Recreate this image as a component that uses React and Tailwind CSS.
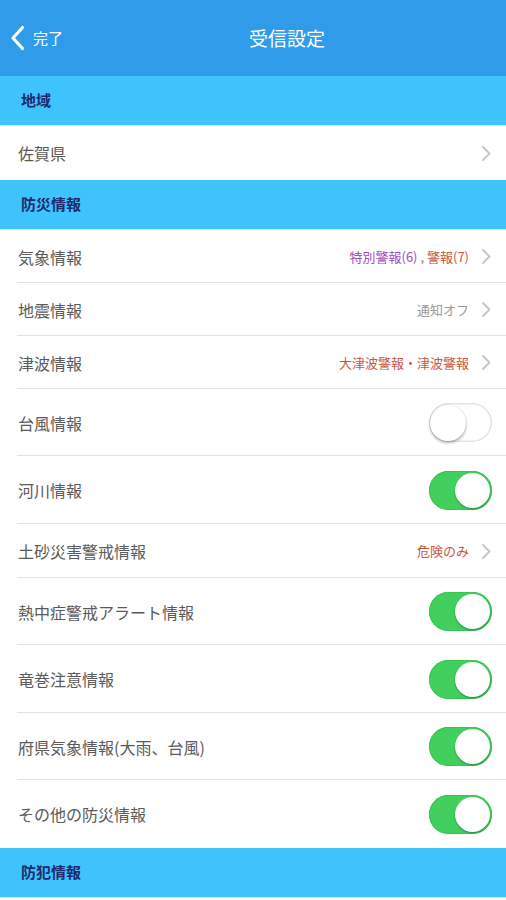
import React from "react";

const font = { fontFamily: '"Noto Sans CJK JP", "Noto Sans", sans-serif' };

function Chevron() {
  return (
    <svg width="11" height="17" viewBox="0 0 11 17" className="ml-3 shrink-0">
      <path d="M2 2 L8.5 8.5 L2 15" fill="none" stroke="#c4c4c8" strokeWidth="1.8" strokeLinecap="round" strokeLinejoin="round" />
    </svg>
  );
}

function Toggle({ on }) {
  return on ? (
    <div className="flex h-[39px] w-[63px] items-center justify-end rounded-full bg-[#41d05e] pr-[2px] shadow-[inset_0_0_0_1px_#39c455]">
      <div className="h-[35px] w-[35px] rounded-full bg-white shadow-[0_1px_2px_rgba(0,0,0,0.35)]" />
    </div>
  ) : (
    <div className="flex h-[39px] w-[63px] items-center justify-start rounded-full bg-white pl-[1px] shadow-[inset_0_0_0_1.5px_#e3e3e3]">
      <div className="h-[36px] w-[36px] rounded-full bg-white shadow-[0_2px_3px_rgba(0,0,0,0.3),0_0_0_1px_rgba(0,0,0,0.05)]" />
    </div>
  );
}

function Section({ title }) {
  return (
    <div className="flex h-[50px] items-center bg-[#3ec3fd] pl-[21px] text-[15px] font-bold text-[#1c2b6b] border-b border-[#c9ecfb]">
      {title}
    </div>
  );
}

function Row({ label, right, toggle, h = "h-[53px]", last }) {
  return (
    <div className={`relative flex ${h} items-center bg-white pl-[18px] pr-[14px]`}>
      <span className="flex-1 text-[16px] text-[#5a5a5a]">{label}</span>
      {toggle !== undefined ? (
        <Toggle on={toggle} />
      ) : (
        <div className="flex items-center">
          <span className="text-[13px]">{right}</span>
          <Chevron />
        </div>
      )}
      {!last && <div className="absolute bottom-0 left-[17px] right-0 h-px bg-[#e2e2e2]" />}
    </div>
  );
}

export default function App() {
  return (
    <div className="w-[506px] bg-white" style={font}>
      <div className="relative flex h-[76px] items-center justify-center bg-[#2f9be9] pl-[68px]">
        <div className="absolute left-[10px] top-0 flex h-full items-center">
          <svg width="16" height="26" viewBox="0 0 16 26">
            <path d="M12.5 2.5 L3 13 L12.5 23.5" fill="none" stroke="white" strokeWidth="3.2" strokeLinecap="round" strokeLinejoin="round" />
          </svg>
          <span className="ml-[7px] text-[15px] text-white">完了</span>
        </div>
        <span className="text-[19px] text-white">受信設定</span>
      </div>
      <Section title="地域" />
      <Row label="佐賀県" right="" h="h-[54px]" last />
      <Section title="防災情報" />
      <Row
        label="気象情報"
        right={
          <>
            <span className="text-[#a24cbf]">特別警報(6)</span>
            <span className="text-[#888]"> , </span>
            <span className="text-[#c9573f]">警報(7)</span>
          </>
        }
      />
      <Row label="地震情報" right={<span className="text-[#9a9a9a]">通知オフ</span>} />
      <Row label="津波情報" right={<span className="text-[#c9573f]">大津波警報・津波警報</span>} />
      <Row label="台風情報" toggle={false} h="h-[67px]" />
      <Row label="河川情報" toggle={true} h="h-[68px]" />
      <Row label="土砂災害警戒情報" right={<span className="text-[#c9573f]">危険のみ</span>} h="h-[54px]" />
      <Row label="熱中症警戒アラート情報" toggle={true} h="h-[67px]" />
      <Row label="竜巻注意情報" toggle={true} h="h-[68px]" />
      <Row label="府県気象情報(大雨、台風)" toggle={true} h="h-[67px]" />
      <Row label="その他の防災情報" toggle={true} h="h-[68px]" last />
      <Section title="防犯情報" />
      <div className="h-[20px] bg-white" />
    </div>
  );
}
